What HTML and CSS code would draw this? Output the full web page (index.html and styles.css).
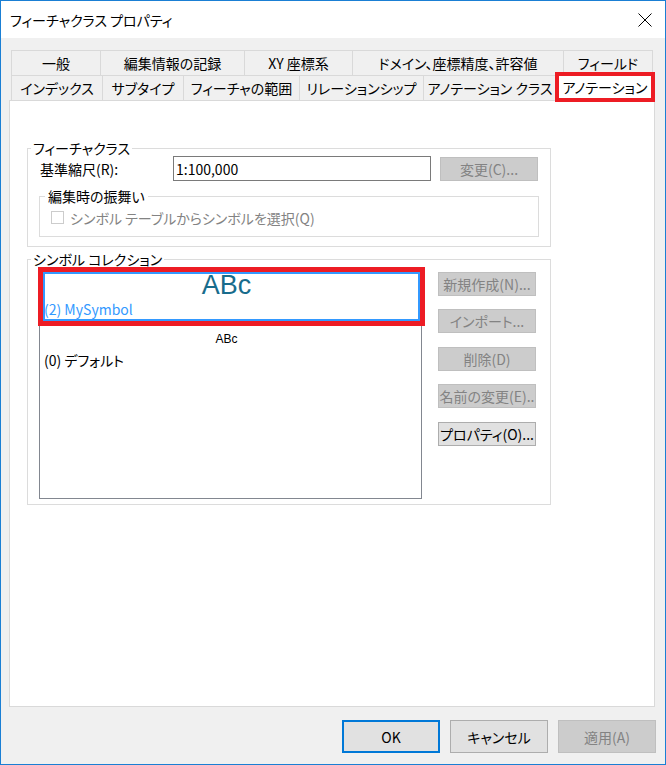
FILE: index.html
```html
<!DOCTYPE html>
<html lang="ja">
<head>
<meta charset="utf-8">
<title>フィーチャクラス プロパティ</title>
<link rel="stylesheet" href="styles.css">
</head>
<body>
<div class="window">
  <div class="titlebar">
    <span class="title">フィーチャクラス プロパティ</span>
    <svg class="close" width="14" height="14" viewBox="0 0 14 14"><path d="M0.5 0.5 L13.5 13.5 M13.5 0.5 L0.5 13.5" stroke="#000" stroke-width="1" fill="none"/></svg>
  </div>
  <div class="client">
    <div class="tabs">
      <div class="tabrow">
        <div class="tab w-general">一般</div>
        <div class="tab w-edit">編集情報の記録</div>
        <div class="tab w-xy">XY 座標系</div>
        <div class="tab w-domain">ドメイン、座標精度、許容値</div>
        <div class="tab w-field">フィールド</div>
      </div>
      <div class="tabrow">
        <div class="tab w-index">インデックス</div>
        <div class="tab w-subtype">サブタイプ</div>
        <div class="tab w-extent">フィーチャの範囲</div>
        <div class="tab w-rel">リレーションシップ</div>
        <div class="tab w-annoclass">アノテーション クラス</div>
        <div class="tab tab-active w-anno">アノテーション</div>
      </div>
    </div>
    <div class="panel">
      <div class="group group-fc">
        <span class="gtitle">フィーチャクラス</span>
        <div class="scale-row">
          <span class="scale-label">基準縮尺(R):</span>
          <div class="textbox">1:100,000</div>
          <div class="btn btn-disabled btn-change">変更(C)...</div>
        </div>
        <div class="group group-edit">
          <span class="gtitle gtitle-inner disabled-text-none">編集時の振舞い</span>
          <div class="check-row">
            <span class="checkbox"></span>
            <span class="check-label">シンボル テーブルからシンボルを選択(Q)</span>
          </div>
        </div>
      </div>
      <div class="group group-sym">
        <span class="gtitle">シンボル コレクション</span>
        <div class="listbox">
          <div class="sym-item sym-selected">
            <div class="preview preview-big">ABc</div>
            <div class="sym-name sym-name-sel">(2) MySymbol</div>
          </div>
          <div class="sym-item">
            <div class="preview preview-small">ABc</div>
            <div class="sym-name">(0) デフォルト</div>
          </div>
        </div>
        <div class="side-buttons">
          <div class="btn btn-disabled side-btn">新規作成(N)...</div>
          <div class="btn btn-disabled side-btn gap14">インポート...</div>
          <div class="btn btn-disabled side-btn">削除(D)</div>
          <div class="btn btn-disabled side-btn gap14">名前の変更(E)..</div>
          <div class="btn side-btn">プロパティ(O)...</div>
        </div>
      </div>
    </div>
    <div class="actions">
      <div class="btn action-btn btn-default">OK</div>
      <div class="btn action-btn">キャンセル</div>
      <div class="btn action-btn btn-disabled">適用(A)</div>
    </div>
  </div>
</div>
</body>
</html>
```

FILE: styles.css
```css
* { box-sizing: border-box; }
html, body { margin: 0; padding: 0; }
body {
  width: 666px;
  height: 765px;
  background: #fff;
  font-family: "Noto Sans CJK JP", "Noto Sans", sans-serif;
  font-size: 14px;
  font-feature-settings: "palt";
  color: #000;
  overflow: hidden;
}
.window {
  width: 666px;
  height: 765px;
  border: 1px solid #1a7fd4;
  background: #f0f0f0;
  display: flex;
  flex-direction: column;
}
.titlebar {
  height: 37px;
  flex: none;
  background: #fff;
  display: flex;
  align-items: center;
  justify-content: space-between;
  padding: 0 13px 0 9px;
}
.title { line-height: 18px; }
.close { display: block; }

.client {
  flex: 1;
  padding: 12px 10px 0 8px;
  display: flex;
  flex-direction: column;
}
.tabs {
  margin: 0 2px;
  position: relative;
  z-index: 1;
}
.tabrow {
  display: flex;
  height: 25px;
}
.tab {
  flex: none;
  height: 25px;
  border-top: 1px solid #d9d9d9;
  border-right: 1px solid #d9d9d9;
  background: #f0f0f0;
  display: flex;
  align-items: center;
  justify-content: center;
  line-height: 18px;
  white-space: nowrap;
}
.tab:first-child { border-left: 1px solid #d9d9d9; }
.w-general { width: 90px; }
.w-edit { width: 144px; }
.w-xy { width: 108px; }
.w-domain { width: 211px; }
.w-field { width: 89px; }
.w-index { width: 92px; }
.w-subtype { width: 81px; }
.w-extent { width: 116px; }
.w-rel { width: 124px; }
.w-annoclass { width: 133px; }
.tab-active {
  position: relative;
  width: 100px;
  height: 28px;
  margin-top: -2px;
  margin-left: -2px;
  align-self: flex-start;
  background: #fff;
  border-left: 1px solid #d9d9d9;
  padding-bottom: 2px;
}
.tab-active::after {
  content: "";
  position: absolute;
  left: -1px;
  right: -1px;
  top: -2px;
  bottom: -1px;
  border: 4px solid #ed1c24;
}

.panel {
  height: 607px;
  flex: none;
  background: #fff;
  border: 1px solid #d9d9d9;
  padding-left: 17px;
  padding-top: 47px;
}
.group {
  position: relative;
  border: 1px solid #dcdcdc;
}
.gtitle {
  position: absolute;
  top: -10px;
  left: 3px;
  padding: 0 2px;
  background: #fff;
  line-height: 18px;
  white-space: nowrap;
}
.group-fc {
  width: 524px;
  height: 99px;
  padding: 7px 0 0 11px;
}
.scale-row {
  display: flex;
  align-items: center;
  height: 25px;
}
.scale-label {
  width: 134px;
  padding-left: 1px;
  line-height: 18px;
}
.textbox {
  width: 258px;
  height: 25px;
  border: 1px solid #7a7a7a;
  background: #fff;
  padding-left: 2px;
  display: flex;
  align-items: center;
  line-height: 18px;
}
.btn {
  display: flex;
  align-items: center;
  justify-content: center;
  background: #e1e1e1;
  border: 1px solid #adadad;
  line-height: 18px;
  white-space: nowrap;
  overflow: hidden;
}
.btn-disabled {
  background: #cccccc;
  border-color: #bfbfbf;
  color: #838383;
}
.btn-change {
  margin-left: 9px;
  width: 98px;
  height: 24px;
}
.group-edit {
  margin-top: 15px;
  width: 500px;
  height: 41px;
  padding: 14px 0 0 11px;
}
.gtitle-inner { left: 5px; padding: 0 3px; }
.check-row {
  display: flex;
  align-items: center;
  height: 13px;
}
.checkbox {
  width: 13px;
  height: 13px;
  border: 1px solid #cccccc;
  background: #fff;
  flex: none;
}
.check-label {
  margin-left: 6px;
  color: #838383;
  line-height: 18px;
  white-space: nowrap;
}

.group-sym {
  margin-top: 12px;
  width: 524px;
  height: 246px;
  padding: 11px 0 0 11px;
  display: flex;
  align-items: flex-start;
}
.listbox {
  width: 383px;
  height: 228px;
  border: 1px solid #828790;
  background: #fff;
  padding-left: 3px;
  flex: none;
}
.sym-item {
  position: relative;
  width: 377px;
  height: 49px;
  border: 2px solid transparent;
}
.sym-selected { border-color: #3399ff; }
.sym-selected::after {
  content: "";
  position: absolute;
  left: -7px;
  right: -7px;
  top: -7px;
  bottom: -7px;
  border: 5px solid #ed1c24;
}
.preview {
  text-align: center;
  padding-right: 10px;
  font-family: "Liberation Sans", Arial, sans-serif;
}
.preview-big {
  font-size: 27px;
  line-height: 22px;
  color: #186c8c;
}
.preview-small {
  font-size: 12px;
  line-height: 16px;
  padding-top: 8px;
}
.sym-name {
  margin-left: -1px;
  line-height: 18px;
  white-space: nowrap;
}
.sym-name-sel {
  color: #3399ff;
  margin-top: 4px;
}
.sym-item + .sym-item .sym-name { margin-top: 4px; }
.side-buttons {
  margin-left: 16px;
  margin-top: 1px;
  display: flex;
  flex-direction: column;
}
.side-btn {
  width: 98px;
  height: 24px;
  margin-top: 13px;
}
.side-btn:first-child { margin-top: 0; }
.side-btn.gap14 { margin-top: 13px; }
.side-buttons .side-btn:nth-child(3),
.side-buttons .side-btn:nth-child(5) { margin-top: 14px; }

.actions {
  display: flex;
  justify-content: flex-end;
  gap: 10px;
  padding-top: 13px;
  margin-right: -1px;
}
.action-btn {
  width: 98px;
  height: 33px;
}
.btn-default {
  border: 2px solid #0078d7;
}
```
